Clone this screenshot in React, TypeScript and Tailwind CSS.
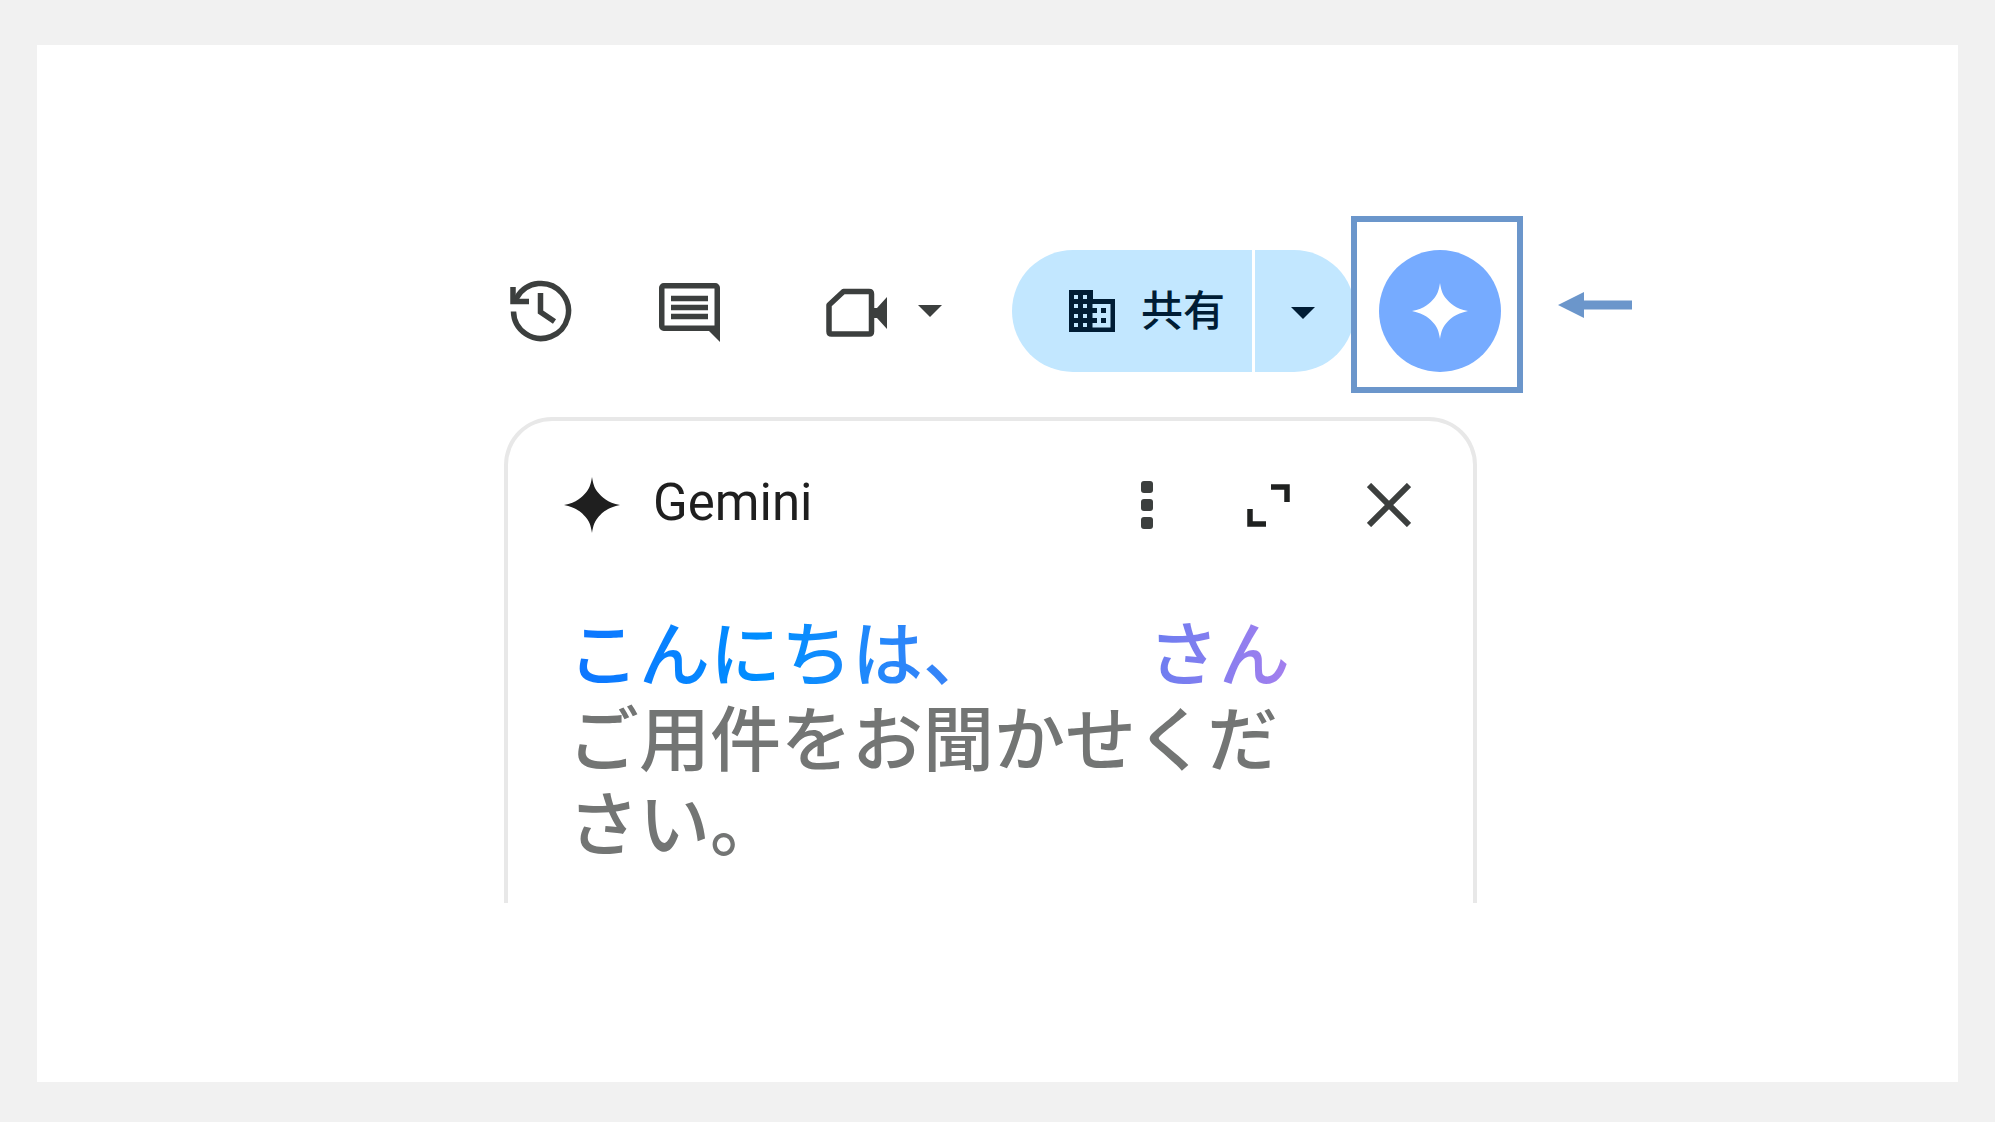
import type { ReactNode } from "react";

const Spark = () => (
  <svg viewBox="0 0 60 60" className="size-14" fill="currentColor" aria-hidden="true">
    <path d="M30 0C31 6 32 11 36 16C41 22 46 27 60 30C46 33 41 38 36 44C32 49 31 54 30 60C29 54 28 49 24 44C19 38 14 33 0 30C14 27 19 22 24 16C28 11 29 6 30 0Z" />
  </svg>
);

const HistoryIcon = () => (
  <svg viewBox="0 0 62 62" className="size-[62px]" fill="none" stroke="currentColor" strokeWidth="5.5" aria-hidden="true">
    <path d="M3.5 31.5A27.5 27.5 0 1 0 7 17.5L3.5 22" />
    <path d="M3 7V21.5H19" strokeWidth="5.5" />
    <path d="M30.5 13V32L44.5 41.5" strokeWidth="5.5" />
  </svg>
);

const CommentIcon = () => (
  <svg viewBox="0 0 62 62" className="size-[62px]" fill="none" stroke="currentColor" strokeWidth="5.5" aria-hidden="true">
    <rect x="2.75" y="5.75" width="55.5" height="42.5" rx="2" />
    <path d="M12 18.5H49M12 27.5H49M12 36.5H49" strokeWidth="5.5" />
    <path d="M48 49L61 62V45Z" fill="currentColor" stroke="none" />
  </svg>
);

const CameraIcon = () => (
  <svg viewBox="0 -5 62 55" className="h-[55px] w-[62px]" fill="none" stroke="currentColor" strokeWidth="5.5" strokeLinejoin="round" aria-hidden="true">
    <path d="M17.5 3.5H43Q45.5 3.5 45.5 6V43.5Q45.5 46 43 46H5.5Q3 46 3 43.5V17Z" />
    <path d="M47 20H51L61 9V41L51 30H47Z" fill="currentColor" stroke="none" />
  </svg>
);

const CaretIcon = () => (
  <svg viewBox="0 0 24 12" className="h-3 w-6" fill="currentColor" aria-hidden="true">
    <path d="M0 0H24L12 12Z" />
  </svg>
);

const BuildingIcon = () => (
  <svg viewBox="0 0 46 42" className="h-[42px] w-[46px]" fill="currentColor" fillRule="evenodd" aria-hidden="true">
    <path d="M0 0H24V9H46V42H0ZM5 5V9H9V5ZM14 5V9H18V5ZM5 14V18H9V14ZM14 14V18H18V14ZM5 24V28H9V24ZM14 24V28H18V24ZM5 33V37H9V33ZM14 33V37H18V33ZM23.5 14V18H28V23H23.5V28H28V33H23.5V37.5H41.5V14Z" />
    <path d="M32 18H37V23H32ZM32 28H37V33H32Z" />
  </svg>
);

const IconButton = ({ label, children }: { label: string; children: ReactNode }) => (
  <button type="button" aria-label={label} className="flex shrink-0 items-center justify-center">
    {children}
  </button>
);

const Toolbar = () => {
  return (
    <div className="flex items-center text-[#3c3f3e]">
      <div className="flex items-center pt-3">
        <div className="ml-1.5 flex">
          <IconButton label="履歴">
            <HistoryIcon />
          </IconButton>
        </div>
        <div className="ml-[87px] flex">
          <IconButton label="コメント">
            <CommentIcon />
          </IconButton>
        </div>
        <button type="button" aria-label="会議" className="ml-[105px] flex items-center gap-[30px]">
          <CameraIcon />
          <CaretIcon />
        </button>
        <div className="ml-[70px] flex h-[122px] shrink-0 gap-[3px] overflow-hidden rounded-full text-[#001d35]">
          <button type="button" className="flex w-[240px] items-center gap-[26px] bg-[#c2e7ff] pl-[57px] text-[42px] font-medium">
            <BuildingIcon />
            <span className="pb-1.5">共有</span>
          </button>
          <button type="button" aria-label="共有オプション" className="flex w-[100px] items-center bg-[#c2e7ff] pl-9 pt-1">
            <CaretIcon />
          </button>
        </div>
      </div>
      <div className="-ml-1 flex h-[177px] w-[172px] shrink-0 items-center justify-center border-6 border-[#6b96cb] pl-1.5 pt-3">
        <button type="button" aria-label="Gemini に相談" className="flex size-[122px] items-center justify-center rounded-full bg-[#76abff] text-white">
          <Spark />
        </button>
      </div>
      <svg viewBox="0 0 74 26" className="ml-[35px] h-[26px] w-[74px] shrink-0" fill="#6b96cb" aria-hidden="true">
        <path d="M0 13L26 0V8.5H74V17.5H26V26Z" />
      </svg>
    </div>
  );
};

const GeminiPanel = () => {
  return (
    <section className="mt-6 h-[486px] w-[973px] rounded-t-[48px] border-4 border-b-0 border-[#e8e8e8] px-14">
      <header className="flex h-[168px] items-center pr-1.5 text-[#3c3f3e]">
        <div className="text-[#1f1f1f]">
          <Spark />
        </div>
        <h1 className="ml-[33px] pb-1 text-[51px] text-[#1f1f1f] [font-family:Roboto,sans-serif]">Gemini</h1>
        <div className="ml-auto flex items-center">
          <IconButton label="その他">
            <svg viewBox="0 0 12 50" className="h-[50px] w-3" fill="currentColor" aria-hidden="true">
              <rect width="12" height="12" y="1" rx="3" />
              <rect width="12" height="12" y="19" rx="3" />
              <rect width="12" height="12" y="37" rx="3" />
            </svg>
          </IconButton>
        </div>
        <div className="ml-[94px] flex">
          <IconButton label="展開">
            <svg viewBox="0 0 43 43" className="size-[43px]" fill="none" stroke="#1f2120" strokeWidth="5.5" aria-hidden="true">
              <path d="M24 3H40V18M3 25V40H19" />
            </svg>
          </IconButton>
        </div>
        <div className="ml-[77px] flex">
          <IconButton label="閉じる">
            <svg viewBox="0 0 44 44" className="size-11" fill="none" stroke="currentColor" strokeWidth="6" aria-hidden="true">
              <path d="M2 2L42 42M42 2L2 42" />
            </svg>
          </IconButton>
        </div>
      </header>
      <div className="mt-[18px] w-[726px] pl-1 text-[71px] font-medium leading-[85px] text-[#737574]">
        <p className="flex justify-between bg-[linear-gradient(90deg,#0f75ff,#008fff_28%,#2f85f9_48%,#6f7df0_82%,#a47fee)] bg-clip-text text-transparent">
          <span>こんにちは、</span>
          <span>さん</span>
        </p>
        <p>ご用件をお聞かせください。</p>
      </div>
    </section>
  );
};

const App = () => {
  return (
    <div className="min-h-screen bg-[#f1f1f1] px-[37px] pb-10 pt-[45px] [font-family:'Noto_Sans_CJK_JP',sans-serif]">
      <main className="flex min-h-[1037px] flex-col bg-white pl-[467px] pt-[171px]">
        <Toolbar />
        <GeminiPanel />
      </main>
    </div>
  );
};

export default App;
